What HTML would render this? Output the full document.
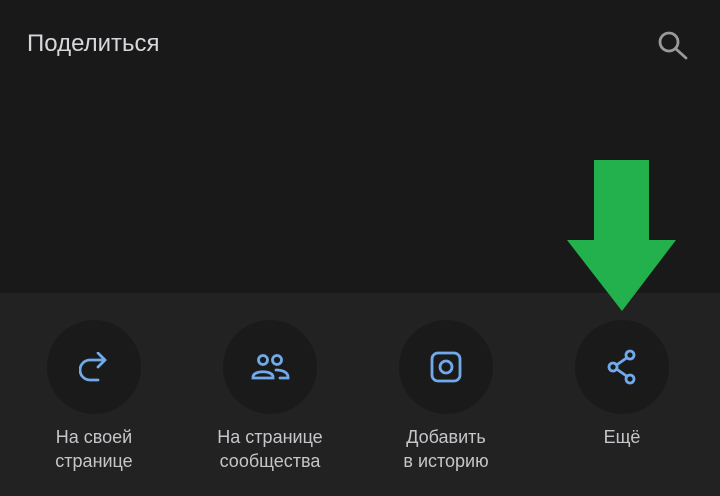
<!DOCTYPE html>
<html><head><meta charset="utf-8"><style>
*{margin:0;padding:0;box-sizing:border-box}
body{width:720px;height:496px;background:#191919;position:relative;overflow:hidden;font-family:"Liberation Sans","Noto Sans CJK SC",sans-serif}
.title{position:absolute;left:27px;top:30px;font-size:24px;color:#d5d7da;font-weight:normal;letter-spacing:0px}
.panel{position:absolute;left:0;top:293px;width:720px;height:203px;background:#222222}
.item{position:absolute;top:320px;width:176px;text-align:center}
.circ{width:94px;height:94px;border-radius:50%;background:#1a1a1a;margin:0 auto;display:flex;align-items:center;justify-content:center}
.lbl{margin-top:11px;font-size:18px;line-height:24px;color:#c4c6c9}
</style></head><body>
<div class="title">Поделиться</div>
<svg style="position:absolute;left:656px;top:30px" width="34" height="30" viewBox="0 0 34 30"><circle cx="13" cy="12" r="9" fill="none" stroke="#9a9a9a" stroke-width="2.8"/><line x1="20" y1="19" x2="30" y2="28" stroke="#9a9a9a" stroke-width="2.8" stroke-linecap="round"/></svg>
<div class="panel"></div>
<div class="item" style="left:6px"><div class="circ"><svg width="30" height="30" viewBox="0 0 30 30" fill="none" stroke="#71aaeb" stroke-width="2.8" stroke-linecap="round" stroke-linejoin="round"><path d="M26 8H11a10 10 0 0 0 0 20h8"/><path d="M19 1l7 7-7 7"/></svg></div><div class="lbl">На своей<br>странице</div></div>
<div class="item" style="left:182px"><div class="circ"><svg width="40" height="30" viewBox="0 0 40 30" fill="none" stroke="#71aaeb" stroke-width="2.8" stroke-linecap="round"><circle cx="13" cy="8" r="4.5"/><circle cx="27" cy="8" r="4.5"/><path d="M3 25c0-7 20-7 20 0v1H3z"/><path d="M26 18c6 0 12 2 12 7v1h-8"/></svg></div><div class="lbl">На странице<br>сообщества</div></div>
<div class="item" style="left:358px"><div class="circ"><svg width="36" height="36" viewBox="0 0 36 36" fill="none" stroke="#71aaeb" stroke-width="2.8"><rect x="4" y="4" width="28" height="28" rx="6"/><circle cx="18" cy="18" r="6"/></svg></div><div class="lbl">Добавить<br>в историю</div></div>
<div class="item" style="left:534px"><div class="circ"><svg width="36" height="36" viewBox="0 0 36 36" fill="none" stroke="#71aaeb" stroke-width="2.8"><circle cx="26" cy="6" r="4"/><circle cx="9" cy="18" r="4"/><circle cx="26" cy="30" r="4"/><path d="M12.5 16l10-7M12.5 20l10 7"/></svg></div><div class="lbl">Ещё</div></div>
<svg style="position:absolute;left:0;top:0" width="720" height="496"><polygon points="594,160 649,160 649,240 676,240 622,311 567,240 594,240" fill="#22b14c"/></svg>
</body></html>
